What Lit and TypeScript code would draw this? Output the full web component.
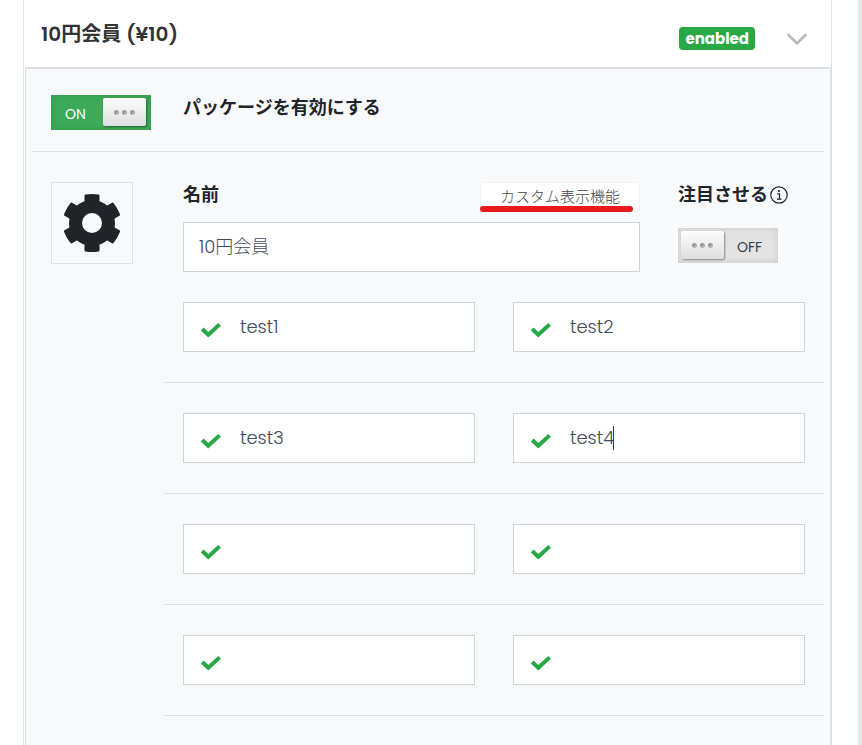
import { LitElement, html, css, svg } from "lit";
import { customElement, property, state } from "lit/decorators.js";
import { classMap } from "lit/directives/class-map.js";

@customElement("toggle-switch")
class ToggleSwitch extends LitElement {
  @property({ type: Boolean }) checked = false;
  @property() label = "";

  static styles = css`
    :host {
      display: block;
    }
    .switch {
      position: relative;
      display: flex;
      box-sizing: border-box;
      width: 100px;
      height: 35px;
      padding: 3px;
      background: #e3e3e3;
      box-shadow: inset 0 0 6px rgba(0, 0, 0, 0.12);
      color: #333d47;
      font-size: 14px;
      line-height: 32px;
      cursor: pointer;
    }
    .switch.on {
      flex-direction: row-reverse;
      padding-right: 5px;
      background: #3daa57;
      color: #fff;
    }
    input {
      position: absolute;
      inset: 0;
      width: 100%;
      height: 100%;
      margin: 0;
      opacity: 0;
      cursor: pointer;
    }
    .knob {
      display: flex;
      align-items: center;
      justify-content: center;
      gap: 3px;
      width: 43px;
      height: 28px;
      border-radius: 2px;
      background: linear-gradient(#fdfdfd, #dedede);
      box-shadow: 1px 1px 2px rgba(0, 0, 0, 0.4);
    }
    .dot {
      width: 5px;
      height: 5px;
      border-radius: 50%;
      background: linear-gradient(135deg, #808080, #c4c4c4);
    }
    .text {
      flex: 1;
      text-align: center;
    }
    .on .text {
      padding-right: 6px;
    }
  `;

  render() {
    return html`
      <label class=${classMap({ switch: true, on: this.checked })}>
        <input
          type="checkbox"
          role="switch"
          aria-label=${this.label}
          .checked=${this.checked}
          @change=${(e: Event) => (this.checked = (e.target as HTMLInputElement).checked)}
        />
        <span class="knob"><i class="dot"></i><i class="dot"></i><i class="dot"></i></span>
        <span class="text">${this.checked ? "ON" : "OFF"}</span>
      </label>
    `;
  }
}

const tooth = "M-7.5 -18V-27.4Q-7.5 -28.4 -6.5 -28.6Q0 -29.6 6.5 -28.6Q7.5 -28.4 7.5 -27.4V-18Z";

@customElement("app-root")
class AppRoot extends LitElement {
  @state() features = [
    ["test1", "test2"],
    ["test3", "test4"],
    ["", ""],
    ["", ""],
  ];
  @state() active = 3;

  static styles = css`
    :host {
      display: block;
      box-sizing: border-box;
      min-height: 100vh;
      padding: 0 26px 0 23px;
      border-right: 4px solid #e4e7ea;
      overflow: hidden;
      background: #fff;
      color: #212529;
      font-family: Poppins, Inter, "Noto Sans CJK JP", sans-serif;
      font-size: 18px;
      line-height: 26px;
    }
    .card {
      display: flex;
      flex-direction: column;
      min-height: 100vh;
      border: solid #dfe2e7;
      border-width: 0 1px;
    }
    .header {
      display: flex;
      align-items: center;
      height: 67px;
      padding: 0 18px 0 17px;
      box-sizing: border-box;
    }
    h2 {
      flex: 1;
      margin: 0;
      font-size: 20px;
      font-weight: 600;
      line-height: 30px;
      color: #333;
    }
    .badge {
      margin-top: 10px;
      padding: 0 6px;
      border-radius: 4px;
      background: #28a745;
      color: #fff;
      font-size: 15px;
      font-weight: 700;
      line-height: 23px;
    }
    .collapse {
      display: flex;
      margin: 12px 0 0 26px;
      padding: 6px;
      border: 0;
      background: none;
      cursor: pointer;
    }
    .panel {
      flex: 1;
      margin: 0 -1px 0 1px;
      padding: 0 6px;
      border: solid #dcdfe6;
      border-width: 2px 2px 0 1px;
      background: #f8f9fb;
    }
    .row {
      display: grid;
      grid-template-columns: 1fr 5fr;
    }
    .enable {
      padding: 26px 0 21px;
      border-bottom: 1px solid #dee2e6;
    }
    .cell {
      min-width: 0;
      padding: 0 19px;
    }
    .strong {
      font-weight: 700;
    }
    .details {
      padding-top: 30px;
    }
    .gear {
      display: grid;
      place-items: center;
      box-sizing: border-box;
      width: 82px;
      height: 82px;
      padding: 0 0 1px;
      border: 1px solid #dee2e6;
      background: #f8f9fb;
    }
    .name-row {
      display: grid;
      grid-template-columns: 3fr 1fr;
    }
    .bar {
      display: flex;
      justify-content: space-between;
      margin-bottom: 10px;
    }
    .custom {
      position: relative;
      width: 160px;
      height: 30px;
      padding: 0;
      border: 1px solid #eef0f2;
      border-radius: 4px;
      background: #fff;
      color: #444;
      font: inherit;
      font-size: 15px;
      font-weight: 300;
      line-height: 28px;
    }
    .marker {
      position: absolute;
      left: -1px;
      right: 6px;
      bottom: -1px;
      height: 6px;
      border-radius: 3px;
      background: #e81a1c;
    }
    .featured {
      display: flex;
      align-items: center;
      gap: 2px;
      margin-bottom: 20px;
      white-space: nowrap;
    }
    .field {
      position: relative;
    }
    .text-input {
      display: block;
      box-sizing: border-box;
      width: 100%;
      height: 50px;
      padding: 0 15px 2px;
      border: 1px solid #ced4da;
      border-radius: 0;
      outline: 0;
      background: #fff;
      color: #3f4c5c;
      font: inherit;
      font-weight: 300;
    }
    .field .text-input {
      padding-left: 56px;
    }
    .check {
      position: absolute;
      left: 17px;
      top: 20px;
    }
    .caret {
      position: absolute;
      left: 100px;
      top: 13px;
      width: 1px;
      height: 24px;
      background: #2d3d50;
    }
    .name-row + .pair {
      padding-top: 30px;
    }
    .pair {
      display: grid;
      grid-template-columns: 1fr 1fr;
      padding: 30px 0;
      border-bottom: 1px solid #dee2e6;
    }
  `;

  private field(value: string, index: number) {
    return html`
      <div class="cell">
        <div class="field">
          <input class="text-input" type="text" aria-label=${`feature ${index + 1}`} .value=${value} />
          <svg class="check" width="22" height="16" viewBox="0 0 22 16" aria-hidden="true">
            <path d="M2.2 7L8.3 12.8L19.6 2.4" fill="none" stroke="#28a745" stroke-width="4" />
          </svg>
          ${index === this.active ? html`<span class="caret"></span>` : ""}
        </div>
      </div>
    `;
  }

  render() {
    return html`
      <section class="card">
        <header class="header">
          <h2>10円会員 (¥10)</h2>
          <span class="badge">enabled</span>
          <button class="collapse" type="button" aria-label="collapse">
            <svg width="20" height="13" viewBox="0 0 20 13">
              <path d="M1.5 2L10 10.500L18.500 2" fill="none" stroke="#b9b9bc" stroke-width="2.600" stroke-linecap="round" />
            </svg>
          </button>
        </header>
        <div class="panel">
          <div class="row enable">
            <div class="cell"><toggle-switch checked label="パッケージを有効にする"></toggle-switch></div>
            <div class="cell strong">パッケージを有効にする</div>
          </div>
          <div class="row details">
            <div class="cell">
              <button class="gear" type="button" aria-label="icon">
                <svg width="60" height="60" viewBox="-30 -30 60 60" fill="#212529">
                  ${[0, 60, 120, 180, 240, 300].map((a) => svg`<path d=${tooth} transform="rotate(${a})" />`)}
                  <circle r="16.500" fill="none" stroke="#212529" stroke-width="13" />
                </svg>
              </button>
            </div>
            <div>
              <div class="name-row">
                <div class="cell">
                  <div class="bar">
                    <label class="strong" for="name">名前</label>
                    <button class="custom" type="button">カスタム表示機能<span class="marker"></span></button>
                  </div>
                  <input id="name" class="text-input" type="text" .value=${"10円会員"} />
                </div>
                <div class="cell">
                  <div class="featured">
                    <span class="strong">注目させる</span>
                    <svg width="18" height="18" viewBox="0 0 18 18" aria-hidden="true">
                      <circle cx="9" cy="9" r="8.200" fill="none" stroke="#212529" stroke-width="1.200" />
                      <circle cx="9" cy="5" r="1.100" fill="#212529" />
                      <path d="M7.200 7.800H9.500V13M7 13.200H11.500" fill="none" stroke="#212529" stroke-width="1.200" />
                    </svg>
                  </div>
                  <toggle-switch label="注目させる"></toggle-switch>
                </div>
              </div>
              ${this.features.map(
                (pair, r) => html`<div class="pair">${pair.map((v, c) => this.field(v, r * 2 + c))}</div>`
              )}
            </div>
          </div>
        </div>
      </section>
    `;
  }
}
